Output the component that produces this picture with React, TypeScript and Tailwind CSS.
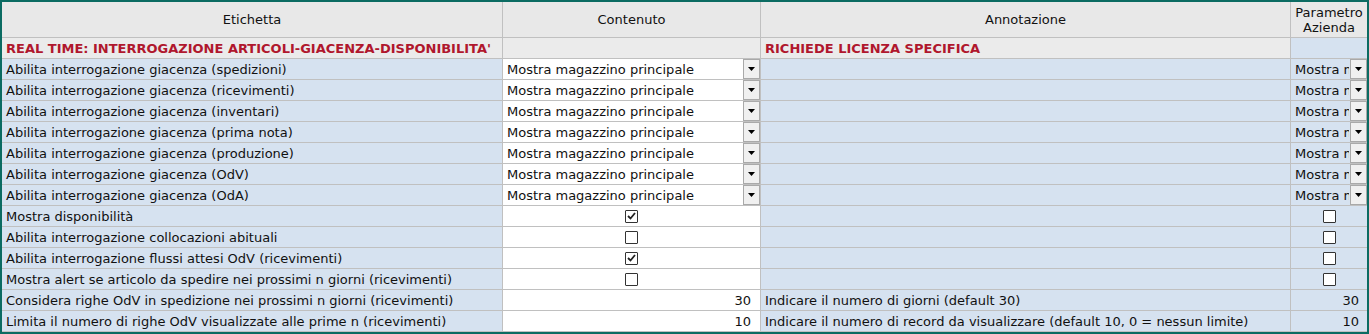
import React from "react";

type Row =
  | { kind: "select"; label: string }
  | { kind: "check"; label: string; content: boolean; param: boolean }
  | { kind: "num"; label: string; value: string; note: string; param: string };

const rows: Row[] = [
  { kind: "select", label: "Abilita interrogazione giacenza (spedizioni)" },
  { kind: "select", label: "Abilita interrogazione giacenza (ricevimenti)" },
  { kind: "select", label: "Abilita interrogazione giacenza (inventari)" },
  { kind: "select", label: "Abilita interrogazione giacenza (prima nota)" },
  { kind: "select", label: "Abilita interrogazione giacenza (produzione)" },
  { kind: "select", label: "Abilita interrogazione giacenza (OdV)" },
  { kind: "select", label: "Abilita interrogazione giacenza (OdA)" },
  { kind: "check", label: "Mostra disponibilità", content: true, param: false },
  { kind: "check", label: "Abilita interrogazione collocazioni abituali", content: false, param: false },
  { kind: "check", label: "Abilita interrogazione flussi attesi OdV (ricevimenti)", content: true, param: false },
  { kind: "check", label: "Mostra alert se articolo da spedire nei prossimi n giorni (ricevimenti)", content: false, param: false },
  {
    kind: "num",
    label: "Considera righe OdV in spedizione nei prossimi n giorni (ricevimenti)",
    value: "30",
    note: "Indicare il numero di giorni (default 30)",
    param: "30",
  },
  {
    kind: "num",
    label: "Limita il numero di righe OdV visualizzate alle prime n (ricevimenti)",
    value: "10",
    note: "Indicare il numero di record da visualizzare (default 10, 0 = nessun limite)",
    param: "10",
  },
];

function Arrow() {
  return (
    <div className="flex h-[20px] w-[17px] shrink-0 items-center justify-center border border-[#a9a9a9] bg-[#f0f0f0]">
      <svg width="7" height="4" viewBox="0 0 7 4">
        <polygon points="0,0 7,0 3.5,4" fill="#000" />
      </svg>
    </div>
  );
}

function Check({ on }: { on: boolean }) {
  return (
    <div className="flex h-[13px] w-[13px] items-center justify-center rounded-[1px] border border-[#333] bg-white">
      {on && (
        <svg width="9" height="8" viewBox="0 0 9 8">
          <polyline points="1,4 3.5,6.5 8,1" fill="none" stroke="#222" strokeWidth="1.8" />
        </svg>
      )}
    </div>
  );
}

const cell = "border-b border-r border-[#c0c0c0] h-[21px] flex items-center overflow-hidden whitespace-nowrap";
const last = "border-b border-[#c0c0c0] h-[21px] flex items-center overflow-hidden whitespace-nowrap";

export default function App() {
  return (
    <div
      className="h-[334px] w-[1369px] border-2 border-[#0b6b62] bg-[#d6e2f0] text-[13px] leading-[15px] text-[#111]"
      style={{ fontFamily: "Verdana, 'DejaVu Sans', sans-serif" }}
    >
      <div className="grid grid-cols-[501px_258px_530px_76px]">
        {/* header */}
        <div className="flex h-[36px] items-center justify-center border-b border-r border-[#c0c0c0] bg-[#e8e8e8]">Etichetta</div>
        <div className="flex h-[36px] items-center justify-center border-b border-r border-[#c0c0c0] bg-[#e8e8e8]">Contenuto</div>
        <div className="flex h-[36px] items-center justify-center border-b border-r border-[#c0c0c0] bg-[#e8e8e8]">Annotazione</div>
        <div className="flex h-[36px] items-center justify-center border-b border-[#c0c0c0] bg-[#e8e8e8] text-center">
          Parametro
          <br />
          Azienda
        </div>

        {/* section */}
        <div className={`${cell} bg-[#ebebeb] pl-[4px] font-bold text-[#b0172d]`}>
          REAL TIME: INTERROGAZIONE ARTICOLI-GIACENZA-DISPONIBILITA'
        </div>
        <div className={`${cell} bg-[#ebebeb]`}></div>
        <div className={`${cell} bg-[#ebebeb] pl-[4px] font-bold text-[#b0172d]`}>RICHIEDE LICENZA SPECIFICA</div>
        <div className={`${last} bg-[#d6e2f0]`}></div>

        {rows.map((r, i) => (
          <React.Fragment key={i}>
            <div className={`${cell} pl-[4px]`}>{r.label}</div>
            {r.kind === "select" && (
              <>
                <div className={`${cell} justify-between bg-white pl-[4px]`}>
                  <span>Mostra magazzino principale</span>
                  <Arrow />
                </div>
                <div className={cell}></div>
                <div className={`${last} justify-between pl-[4px]`}>
                  <span className="w-[54px] overflow-hidden">Mostra magazzino</span>
                  <Arrow />
                </div>
              </>
            )}
            {r.kind === "check" && (
              <>
                <div className={`${cell} justify-center bg-white`}>
                  <Check on={r.content} />
                </div>
                <div className={cell}></div>
                <div className={`${last} justify-center`}>
                  <Check on={r.param} />
                </div>
              </>
            )}
            {r.kind === "num" && (
              <>
                <div className={`${cell} justify-end bg-white pr-[9px]`}>{r.value}</div>
                <div className={`${cell} pl-[4px]`}>{r.note}</div>
                <div className={`${last} justify-end pr-[8px]`}>{r.param}</div>
              </>
            )}
          </React.Fragment>
        ))}
      </div>
    </div>
  );
}
